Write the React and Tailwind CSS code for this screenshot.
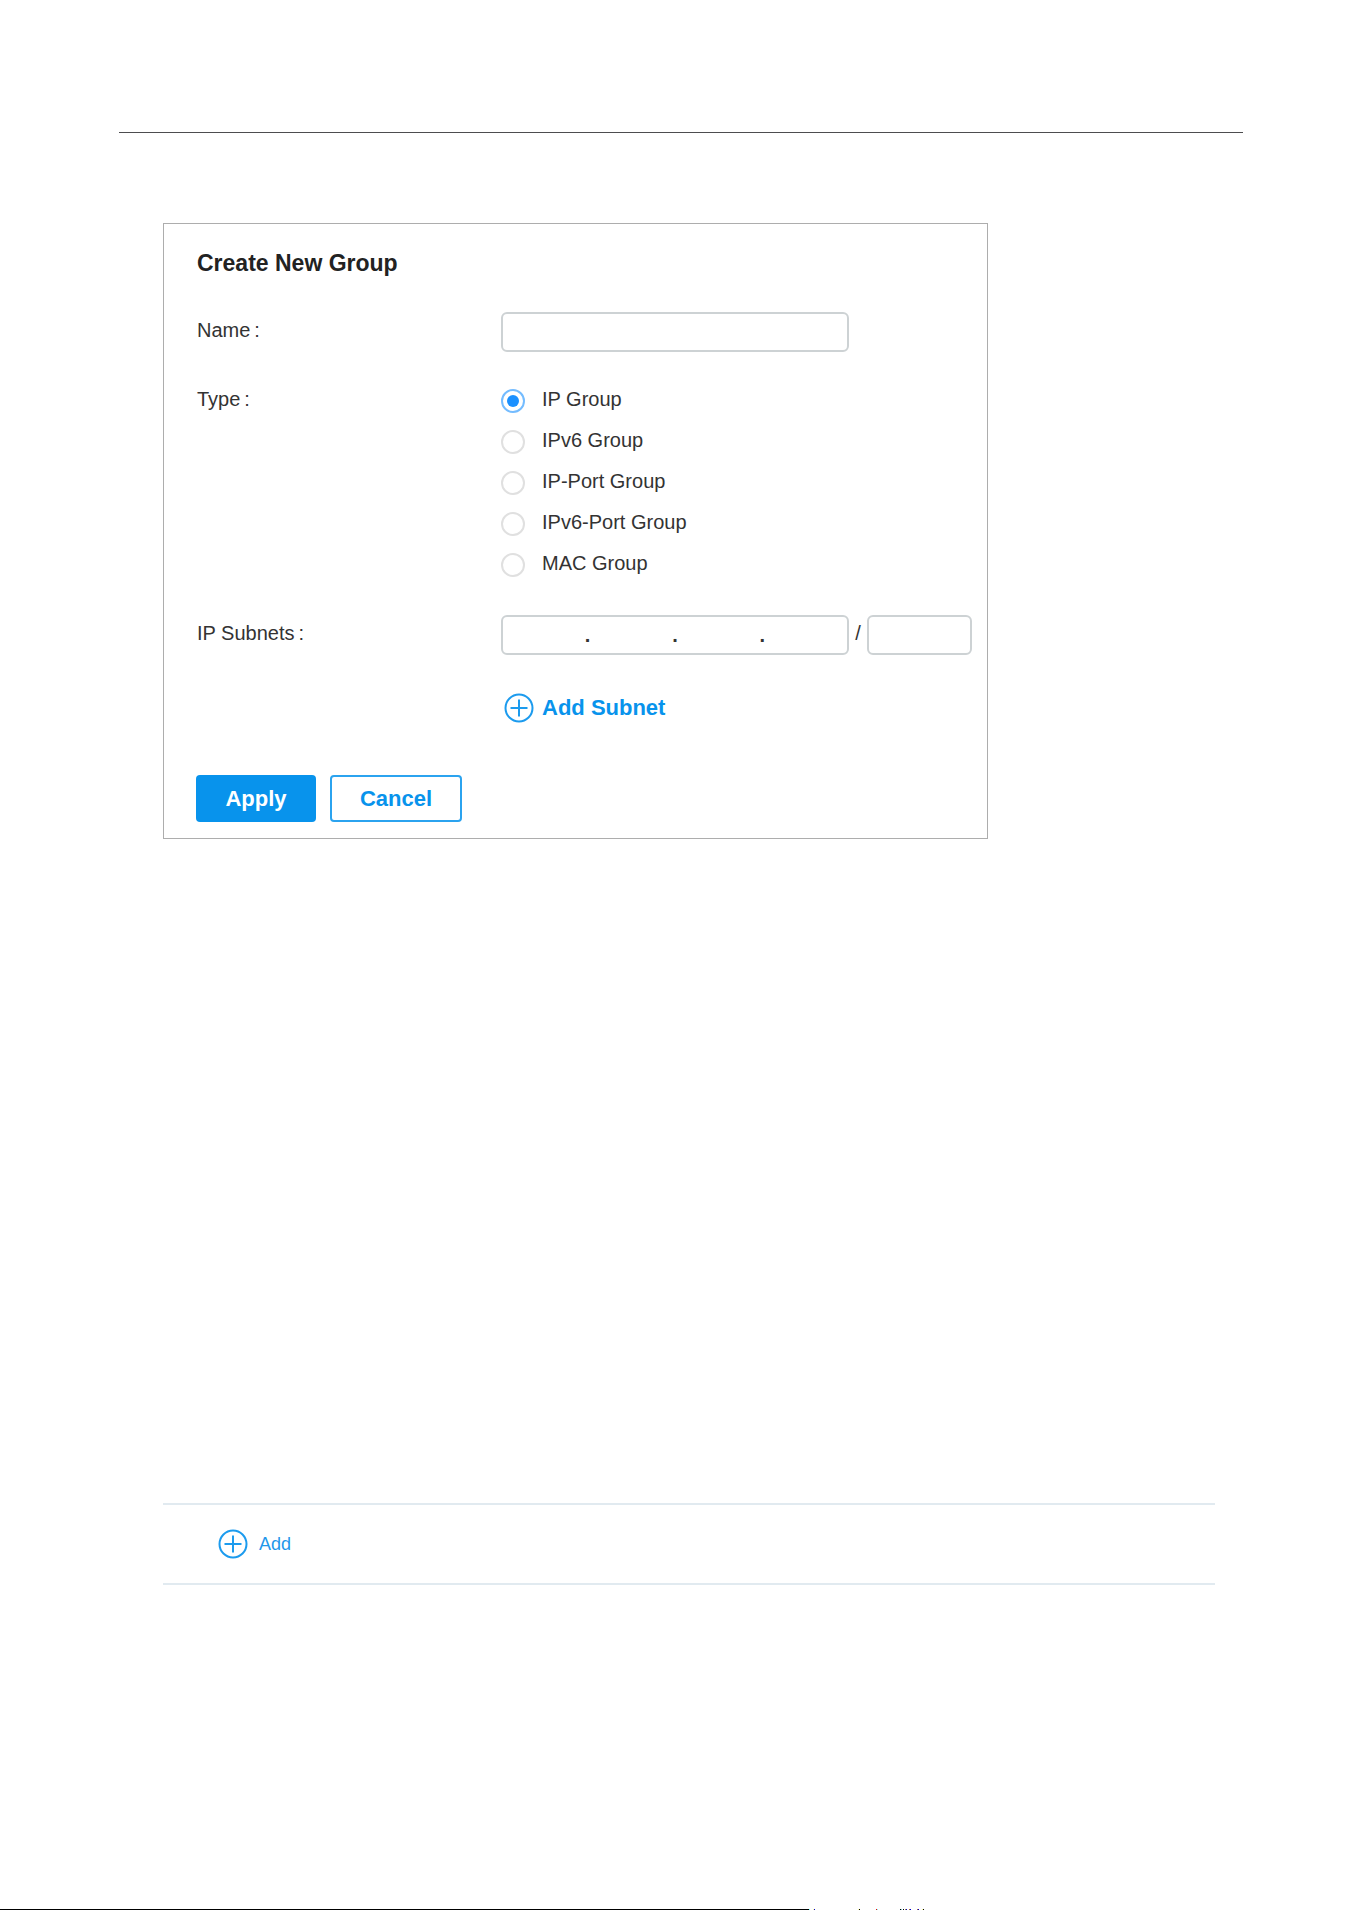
import { useState } from "react";

const groupTypes = ["IP Group", "IPv6 Group", "IP-Port Group", "IPv6-Port Group", "MAC Group"];

// leftover marks after the footer rule: [x, width, colour]
const footerMarks = [
  [0, 1, "#7ff"],
  [4, 1, "#ff9"],
  [5, 1, "#00c"],
  [49, 1, "#ff9"],
  [50, 1, "#000"],
  [67, 1, "#e00"],
  [68, 1, "#7ff"],
  [91, 1, "#000"],
  [92, 1, "#7cc"],
  [94, 1, "#000"],
  [96, 1, "#a84"],
  [97, 1, "#00c"],
  [100, 1, "#a64"],
  [101, 1, "#00c"],
  [108, 1, "#a64"],
  [109, 1, "#00c"],
  [113, 1, "#ff9"],
  [114, 1, "#000"],
];

export default function App() {
  const [type, setType] = useState(groupTypes[0]);

  return (
    <div className="flex min-h-screen flex-col bg-white font-['Liberation_Sans',Arial,sans-serif] text-xl leading-6 text-[#333]">
      <hr className="mx-[119px] mt-[132px] border-t border-[#4d4d4f]" />

      <main className="mt-[90px] flex flex-col pr-[147px] pl-[163px]">
        <form className="w-full max-w-[825px] border border-[#adadad] pt-[25px] pr-2 pb-4 pl-[33px]">
          <h1 className="text-[23px] leading-7 font-bold text-[#222]">Create New Group</h1>

          <div className="mt-[35px] flex">
            <FieldLabel htmlFor="name">Name</FieldLabel>
            <input
              id="name"
              type="text"
              className="h-10 w-[348px] rounded-md border-2 border-[#cdd2d4] px-3 outline-none"
            />
          </div>

          <div className="mt-[29px] flex" role="radiogroup" aria-labelledby="type-label">
            <FieldLabel id="type-label">Type</FieldLabel>
            <div className="flex flex-col gap-[17px] pt-2">
              {groupTypes.map((t) => (
                <label key={t} className="flex h-6 gap-[17px]">
                  <input
                    type="radio"
                    name="type"
                    checked={type === t}
                    onChange={() => setType(t)}
                    className="grid size-6 appearance-none place-content-center rounded-full border-2 border-[#e0e0e0] before:size-3 before:rounded-full checked:border-[#74bcff] checked:before:bg-[#1a90ff]"
                  />
                  <span className="-mt-0.5">{t}</span>
                </label>
              ))}
            </div>
          </div>

          <div className="mt-[38px] flex" role="group" aria-labelledby="subnet-label">
            <FieldLabel id="subnet-label">IP Subnets</FieldLabel>
            <div className="flex h-10 w-[348px] items-center rounded-md border-2 border-[#cdd2d4]">
              <Octet n={1} />
              <b>.</b>
              <Octet n={2} />
              <b>.</b>
              <Octet n={3} />
              <b>.</b>
              <Octet n={4} />
            </div>
            <span className="w-[18px] pt-[6px] text-center">/</span>
            <input
              type="text"
              aria-label="Prefix length"
              className="h-10 w-[105px] rounded-md border-2 border-[#cdd2d4] px-3 outline-none"
            />
          </div>

          <button
            type="button"
            className="mt-[38px] ml-[307px] flex items-center gap-2 text-[22px] font-bold text-[#0893ec]"
          >
            <PlusCircle />
            Add Subnet
          </button>

          <div className="mt-[52px] -ml-px flex gap-[14px] text-[22px] font-bold">
            <button type="button" className="h-[47px] w-[120px] rounded bg-[#0893ec] text-white">
              Apply
            </button>
            <button
              type="reset"
              className="h-[47px] w-[132px] rounded border-2 border-[#2ba3ef] text-[#0893ec]"
            >
              Cancel
            </button>
          </div>
        </form>

        <div className="mt-[664px] w-full border-y-2 border-[#e1eaf0] py-6 pl-[55px]">
          <button type="button" className="flex items-center gap-[11px] text-lg text-[#1f97ea]">
            <PlusCircle />
            Add
          </button>
        </div>
      </main>

      <footer className="mt-auto flex">
        <div className="h-px w-[809px] bg-black" />
        <svg width="120" height="1" shapeRendering="crispEdges" aria-hidden="true">
          {footerMarks.map(([x, w, fill]) => (
            <rect key={x} x={x} y="0" width={w} height="1" fill={fill} />
          ))}
        </svg>
      </footer>
    </div>
  );
}

function FieldLabel({ id, htmlFor, children }) {
  const Tag = htmlFor ? "label" : "span";
  return (
    <Tag id={id} htmlFor={htmlFor} className="flex w-[304px] shrink-0 gap-1 pt-[6px]">
      {children}
      <span>:</span>
    </Tag>
  );
}

function Octet({ n }) {
  return (
    <input
      type="text"
      aria-label={`IP octet ${n}`}
      className="h-full w-0 flex-1 text-center outline-none"
    />
  );
}

function PlusCircle() {
  return (
    <svg
      className="size-[30px] shrink-0"
      viewBox="0 0 30 30"
      fill="none"
      stroke="#1c9bee"
      strokeWidth="2"
      aria-hidden="true"
    >
      <circle cx="15" cy="15" r="13.5" />
      <path d="M6.5 15h17M15 6.5v17" />
    </svg>
  );
}
